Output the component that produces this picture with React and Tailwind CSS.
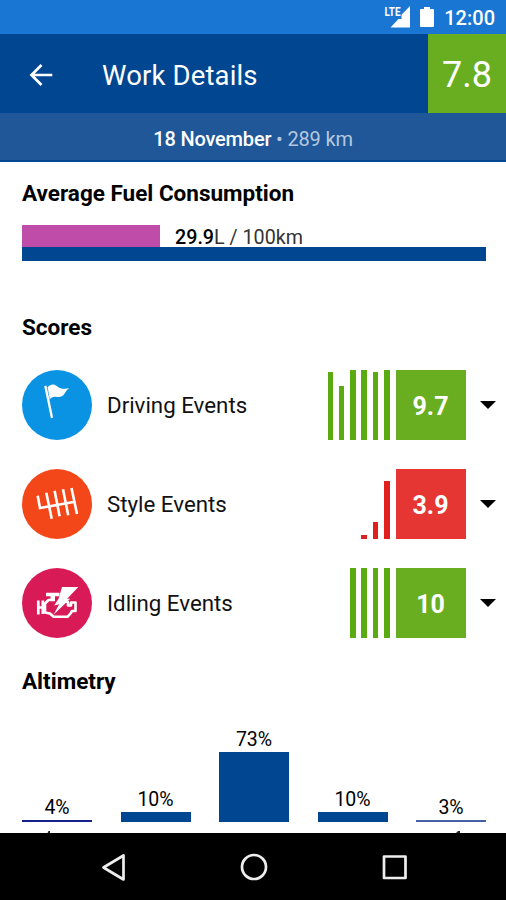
const scores = [
  { label: 'Driving Events', score: '9.7', circle: 'bg-[#0a92e3]', box: 'bg-[#68ae20]', bar: 'bg-[#5aab12]', bars: [68, 54, 70, 70, 68, 70], Icon: FlagIcon },
  { label: 'Style Events', score: '3.9', circle: 'bg-[#f3471a]', box: 'bg-[#e53634]', bar: 'bg-[#df201f]', bars: [4, 17, 58], Icon: GearIcon },
  { label: 'Idling Events', score: '10', circle: 'bg-[#d81b57]', box: 'bg-[#68ae20]', bar: 'bg-[#5aab12]', bars: [70, 70, 70, 70], Icon: EngineIcon },
]

const altimetry = [
  { value: '4%', height: 2.5, color: 'bg-[#16208a]' },
  { value: '10%', height: 10, color: 'bg-[#004691]' },
  { value: '73%', height: 70, color: 'bg-[#004691]' },
  { value: '10%', height: 10, color: 'bg-[#004691]' },
  { value: '3%', height: 2, color: 'bg-[#4560a4]' },
]

function FlagIcon() {
  return (
    <svg viewBox="0 0 70 70" className="size-full" fill="#fff">
      <path d="M22.2 16.2l2.300-.6 6.600 32-2.200.6z" />
      <path d="M25.600 17c3.400-3.400 6.500-3.300 9.400-.8 3.300 2.700 7.400 2.900 12.300 2.100-2.200 1.200-3.500 3.100-4.700 5.200-2.100 3.800-5.500 3.800-8.600 3.300-2.800-.4-4.800.7-6.200 2.600z" />
    </svg>
  )
}

function GearIcon() {
  return (
    <svg viewBox="0 0 70 70" className="size-full" fill="none" stroke="#fff" strokeWidth="2.600">
      <path d="M15.700 26.700l2.300 12.300L53 32.700M24.300 23.700l5.400 26M32.600 21.700l5 25.600M41 20.300l5.200 25.900M49.500 19l5.500 25.900" />
    </svg>
  )
}

function EngineIcon() {
  return (
    <svg viewBox="0 0 70 70" className="size-full" fill="none">
      <path d="M16.300 32.500v14M16.300 39.500h5M20.800 32.500v13.500" stroke="#fff" strokeWidth="2.700" />
      <path d="M24 24.700h13.500v3.600H24zM28.500 28h4.500v4h-4.500z" fill="#fff" />
      <path d="M33 32h-6.500l-3.500 3.500v9l5 1 3.500 3.300h14l3-3.300 1.500-2.500h3.500V34.500h-4.500v3h-3v-3.500l-5-.7" stroke="#fff" strokeWidth="2.600" strokeLinejoin="round" />
      <path d="M40 19h16.300L45.200 30.800h3L31.500 46.700l5.700-10.500-5 1.200 4.500-7z" fill="#fff" />
    </svg>
  )
}

function StatusBar() {
  return (
    <div className="h-[34px] bg-[#1976d2] flex items-center justify-end pr-[11px] text-white">
      <svg viewBox="0 0 28 24" className="w-7 h-6 mr-[9px]" fill="#fff">
        <path d="M27 1v21.500H7.500L15.500 14h3V9.700z" />
        <text x="1.500" y="11" fontSize="13" fontWeight="700" textLength="16" lengthAdjust="spacingAndGlyphs" fontFamily="Roboto, sans-serif">LTE</text>
      </svg>
      <svg viewBox="0 0 14 20" className="w-3.5 h-5 mr-[10px]" fill="#fff">
        <path d="M4 0h6v2h3a1 1 0 0 1 1 1v16a1 1 0 0 1-1 1H1a1 1 0 0 1-1-1V3a1 1 0 0 1 1-1h3z" />
      </svg>
      <span className="text-[20px] font-medium leading-none pt-0.5">12:00</span>
    </div>
  )
}

function Header() {
  return (
    <header>
      <div className="h-[79px] bg-[#004691] flex items-center text-white">
        <svg viewBox="0 0 24 22" className="w-6 h-[22px] ml-[29px] mt-0.5" fill="none" stroke="#fff" strokeWidth="2.700">
          <path d="M23.300 11H2.500M12.500 1L2.500 11l10 10" />
        </svg>
        <h1 className="ml-[49px] pt-[4px] text-[27.500px] tracking-[0.15px]">Work Details</h1>
        <div className="ml-auto w-[78px] h-full bg-[#68ae20] flex items-center justify-center text-[36px] pt-[3px]">7.8</div>
      </div>
      <div className="h-[49px] bg-[#1f5799] border-b-2 border-[#004691] flex items-center justify-center text-[20px] tracking-[-0.18px] text-white pt-1">
        <span className="font-medium">18 November</span>
        <span className="text-[#b5c7df] whitespace-pre"> • 289 km</span>
      </div>
    </header>
  )
}

function ScoreRow({ label, score, circle, box, bar, bars, Icon }) {
  return (
    <div className="h-[70px] flex items-center">
      <div className={`size-[70px] rounded-full shrink-0 ${circle}`}>
        <Icon />
      </div>
      <span className="ml-[15px] text-[22.300px] text-[#111] pt-[2px]">{label}</span>
      <div className="ml-auto h-full flex items-end gap-[5.800px] mr-[6px]">
        {bars.map((h, i) => (
          <div key={i} className={`w-[5.500px] ${bar}`} style={{ height: h }} />
        ))}
      </div>
      <div className={`size-[70px] shrink-0 flex items-center justify-center text-[25px] font-bold text-white pt-[3px] ${box}`}>{score}</div>
      <svg viewBox="0 0 16 8" className="w-4 h-2 ml-3.5 mr-[10.500px] shrink-0">
        <path d="M0 0h16L8 8z" fill="#000" />
      </svg>
    </div>
  )
}

export default function App() {
  return (
    <div className="w-[506px] h-[900px] flex flex-col bg-white overflow-hidden font-[Roboto,sans-serif] text-black">
      <StatusBar />
      <Header />
      <main className="h-[671px] pl-[22px] overflow-hidden">
        <h2 className="mt-[16px] h-[30px] leading-[30px] text-[22.500px] font-bold">Average Fuel Consumption</h2>
        <div className="mt-[17px] w-[464px]">
          <div className="flex h-[22px]">
            <div className="w-[138px] bg-[#c04ca9]" />
            <div className="ml-[15px] text-[19.700px] leading-[25px] text-[#333]">
              <span className="font-medium text-black">29.9</span>L / 100km
            </div>
          </div>
          <div className="h-3.5 bg-[#004691]" />
        </div>

        <h2 className="mt-[51px] h-[30px] leading-[30px] text-[22.500px] font-bold">Scores</h2>
        <div className="mt-[28px] flex flex-col gap-[29px]">
          {scores.map((s) => (
            <ScoreRow key={s.label} {...s} />
          ))}
        </div>

        <h2 className="mt-[28px] h-[30px] leading-[30px] text-[22.500px] font-bold">Altimetry</h2>
        <div className="w-[464px] h-[126px] flex items-end justify-between">
          {altimetry.map((a, i) => (
            <div key={i} className="w-[70px] flex flex-col items-center">
              <span className="text-[19.500px] leading-[25px]">{a.value}</span>
              <div className={`w-full ${a.color}`} style={{ height: a.height }} />
            </div>
          ))}
        </div>
        <svg viewBox="0 0 464 11" className="w-[464px] h-[11px]">
          <path d="M25.500 11l1-2h1.500v2zM434 11l2-2h2v2z" fill="#222" />
        </svg>
      </main>
      <nav className="h-[67px] bg-black">
        <svg viewBox="0 0 506 67" className="w-full h-full" fill="none" stroke="#eee" strokeWidth="2.700" strokeLinejoin="round">
          <path d="M103.500 34.500l20-12v24z" />
          <circle cx="254" cy="34" r="12" />
          <rect x="384" y="23.500" width="21.500" height="21.500" />
        </svg>
      </nav>
    </div>
  )
}
